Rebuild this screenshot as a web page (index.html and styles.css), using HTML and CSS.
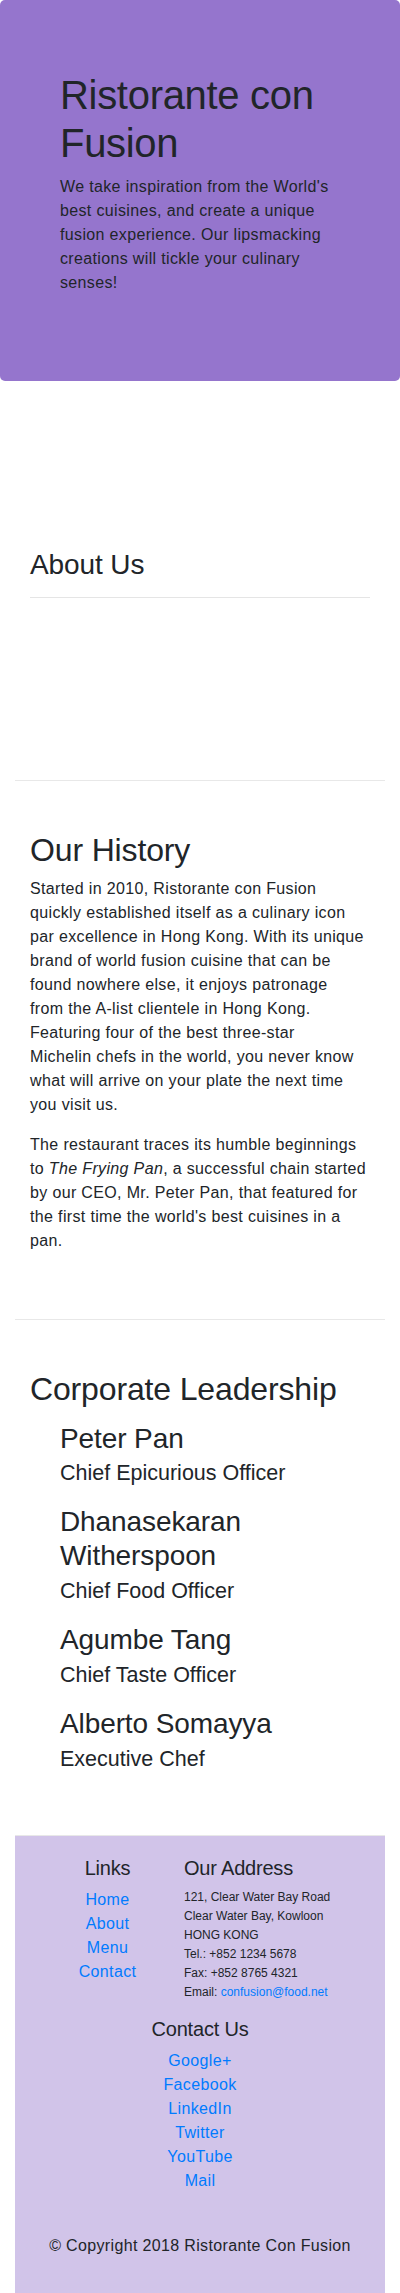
FILE: index.html
```html
<!DOCTYPE html>
<html lang="en">
<head>
<meta charset="utf-8">
<title>Ristorante con Fusion: About Us</title>
<link rel="stylesheet" href="styles.css">
</head>
<body>
<header class="jumbotron">
  <h1 class="brand-title">Ristorante con Fusion</h1>
  <p class="brand-lead">We take inspiration from the World's best cuisines, and create a unique fusion experience. Our lipsmacking creations will tickle your culinary senses!</p>
</header>

<main class="page">
  <section class="row-content about">
    <h3 class="section-title-sm">About Us</h3>
    <hr class="rule">
  </section>

  <section class="row-content history">
    <h2 class="section-title">Our History</h2>
    <p class="history-text">Started in 2010, Ristorante con Fusion<br>quickly established itself as a culinary icon<br>par excellence in Hong Kong. With its unique<br>brand of world fusion cuisine that can be<br>found nowhere else, it enjoys patronage<br>from the A-list clientele in Hong Kong.<br>Featuring four of the best three-star<br>Michelin chefs in the world, you never know<br>what will arrive on your plate the next time<br>you visit us.</p>
    <p class="history-text">The restaurant traces its humble beginnings<br>to <em>The Frying Pan</em>, a successful chain started<br>by our CEO, Mr. Peter Pan, that featured for<br>the first time the world's best cuisines in a<br>pan.</p>
  </section>

  <section class="row-content leadership">
    <h2 class="section-title">Corporate Leadership</h2>
    <ul class="leaders">
      <li class="leader">
        <h3 class="leader-name">Peter Pan</h3>
        <h4 class="leader-role">Chief Epicurious Officer</h4>
      </li>
      <li class="leader">
        <h3 class="leader-name">Dhanasekaran Witherspoon</h3>
        <h4 class="leader-role">Chief Food Officer</h4>
      </li>
      <li class="leader">
        <h3 class="leader-name">Agumbe Tang</h3>
        <h4 class="leader-role">Chief Taste Officer</h4>
      </li>
      <li class="leader">
        <h3 class="leader-name">Alberto Somayya</h3>
        <h4 class="leader-role">Executive Chef</h4>
      </li>
    </ul>
  </section>
</main>

<footer class="footer">
  <div class="footer-top">
    <div class="footer-links">
      <h5 class="footer-heading">Links</h5>
      <ul class="footer-list">
        <li><a href="#">Home</a></li>
        <li><a href="#">About</a></li>
        <li><a href="#">Menu</a></li>
        <li><a href="#">Contact</a></li>
      </ul>
    </div>
    <div class="footer-address-col">
      <h5 class="footer-heading">Our Address</h5>
      <address class="address">
        121, Clear Water Bay Road<br>
        Clear Water Bay, Kowloon<br>
        HONG KONG<br>
        Tel.: +852 1234 5678<br>
        Fax: +852 8765 4321<br>
        Email: <a href="#">confusion@food.net</a>
      </address>
    </div>
  </div>
  <div class="footer-social">
    <h5 class="footer-heading">Contact Us</h5>
    <ul class="footer-list">
      <li><a href="#">Google+</a></li>
      <li><a href="#">Facebook</a></li>
      <li><a href="#">LinkedIn</a></li>
      <li><a href="#">Twitter</a></li>
      <li><a href="#">YouTube</a></li>
      <li><a href="#">Mail</a></li>
    </ul>
  </div>
  <p class="copyright">&copy; Copyright 2018 Ristorante Con Fusion</p>
</footer>
</body>
</html>
```

FILE: styles.css
```css
* {
  box-sizing: border-box;
}

body {
  margin: 0;
  font-family: "Liberation Sans", Arial, sans-serif;
  font-size: 16px;
  line-height: 1.5;
  letter-spacing: 0.35px;
  color: #212529;
  background: #ffffff;
}

h1, h2, h3, h4, h5, p, ul {
  margin: 0;
  padding: 0;
  font-weight: 500;
}

a {
  color: #007bff;
  text-decoration: none;
}

/* Jumbotron */
.jumbotron {
  background: #9575cd;
  border-radius: 5px;
  padding: 71px 60px 70px;
}

.brand-title {
  font-size: 40px;
  line-height: 48px;
  letter-spacing: -0.3px;
  margin-bottom: 8px;
}

.brand-lead {
  line-height: 24px;
  margin-bottom: 16px;
}

/* Content sections */
.page {
  margin: 0 15px;
}

.row-content {
  padding: 50px 15px;
  border-bottom: 1px solid #e8e8e8;
}

.about {
  height: 400px;
  padding-top: 167px;
  padding-bottom: 0;
}

.section-title-sm {
  font-size: 28px;
  line-height: 33.6px;
  letter-spacing: -0.1px;
}

.rule {
  margin: 15px 0 0;
  border: 0;
  border-top: 1px solid rgba(0, 0, 0, 0.1);
}

.section-title {
  font-size: 32px;
  line-height: 38.4px;
  letter-spacing: -0.15px;
}

.history .section-title {
  margin-bottom: 8px;
}

.history-text {
  line-height: 24px;
  margin-bottom: 16px;
}

.leadership {
  padding-bottom: 63px;
}

.leadership .section-title {
  margin-bottom: 12.7px;
}

.leaders {
  list-style: none;
  padding-left: 30px;
}

.leader + .leader {
  margin-top: 19px;
}

.leader-name {
  font-size: 28px;
  line-height: 33.6px;
  letter-spacing: -0.1px;
}

.leader-role {
  font-size: 21.5px;
  line-height: 26px;
  letter-spacing: 0;
  margin-top: 5.4px;
}

/* Footer */
.footer {
  margin: 0 15px;
  background: #d1c4e9;
  padding: 20px 0 35px;
}

.footer-top {
  display: flex;
}

.footer-links {
  margin-left: 31px;
  width: 123px;
  padding: 0 15px;
  text-align: center;
}

.footer-address-col {
  flex: 1;
  padding: 0 15px;
}

.footer-heading {
  font-size: 20px;
  line-height: 24px;
  letter-spacing: -0.2px;
  margin-bottom: 8px;
}

.footer-list {
  list-style: none;
  line-height: 24px;
}

.address {
  font-style: normal;
  font-size: 12px;
  line-height: 19px;
  letter-spacing: 0;
  margin-bottom: 15px;
}

.footer-social {
  text-align: center;
}

.copyright {
  text-align: center;
  line-height: 24px;
  margin-top: 41px;
}
```
